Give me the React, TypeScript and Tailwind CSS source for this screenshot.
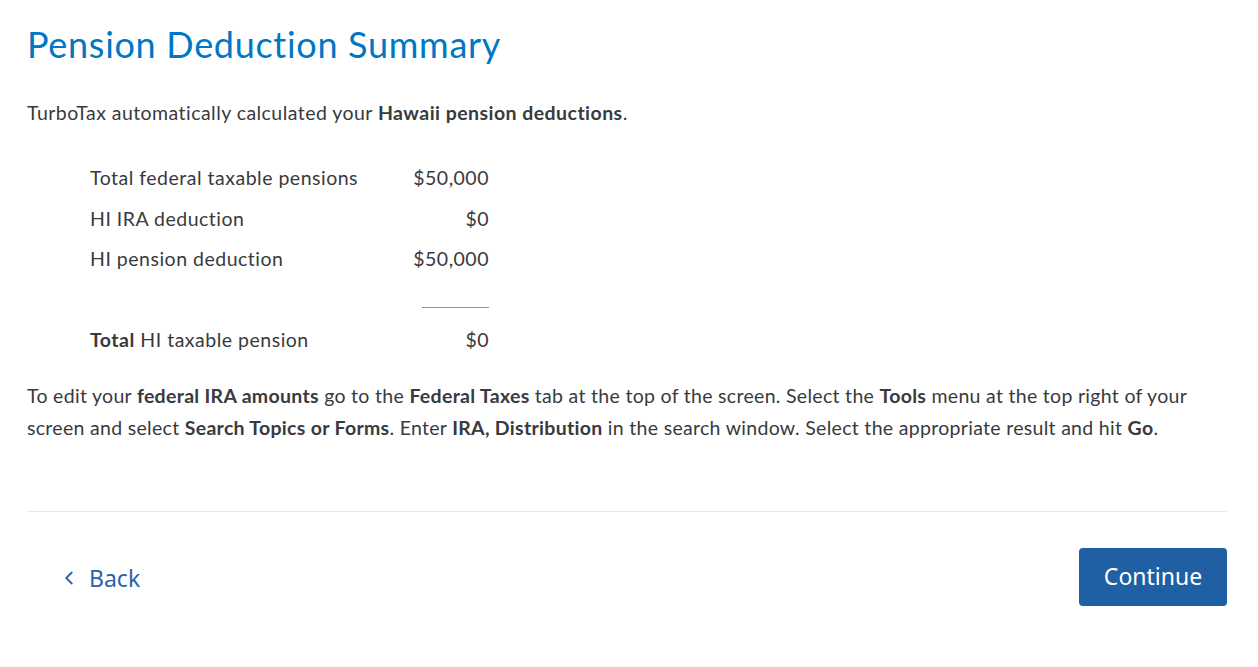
import { FC, ReactNode } from 'react';
import { ChevronLeft } from 'lucide-react';

interface Row {
  label: ReactNode;
  amount: string;
}

const rows: Row[] = [
  { label: 'Total federal taxable pensions', amount: '$50,000' },
  { label: 'HI IRA deduction', amount: '$0' },
  { label: 'HI pension deduction', amount: '$50,000' },
];

const App: FC = () => {
  return (
    <div className="min-h-screen bg-white font-['Lato','Noto_Sans',sans-serif] text-[#393a3d] [font-variant-ligatures:none]">
      <div className="w-[1200px] ml-[27px] pt-[22px]">
        {/* Title */}
        <h1 className="text-[36px] leading-[44px] tracking-[0.7px] text-[#0077c5] font-normal">
          Pension Deduction Summary
        </h1>

        <p className="mt-[34px] text-[19.5px] leading-[26px] tracking-[0.45px]">
          TurboTax automatically calculated your <b className="font-bold">Hawaii pension deductions</b>.
        </p>

        {/* Table of amounts */}
        <div className="ml-[63px] mt-[32px] w-[399px] text-[19.5px] leading-[26px] tracking-[0.5px]">
          {rows.map((r, i) => (
            <div key={i} className="flex justify-between items-center h-[40.5px]">
              <span>{r.label}</span>
              <span>{r.amount}</span>
            </div>
          ))}
          <div className="flex justify-end mt-[27px]">
            <div className="w-[67px] border-t border-[#8d9096]" />
          </div>
          <div className="flex justify-between mt-[19px]">
            <span>
              <b className="font-bold">Total</b> HI taxable pension
            </span>
            <span>$0</span>
          </div>
        </div>

        <p className="mt-[27px] text-[19.5px] leading-[32px] tracking-[0.3px]">
          To edit your <b className="font-bold">federal IRA amounts</b> go to the <b className="font-bold">Federal Taxes</b> tab at the top of the screen. Select the <b className="font-bold">Tools</b> menu at the top right of your screen and select <b className="font-bold">Search Topics or Forms</b>. Enter <b className="font-bold">IRA, Distribution</b> in the search window. Select the appropriate result and hit <b className="font-bold">Go</b>.
        </p>

        {/* Footer nav */}
        <div className="mt-[67px] border-t border-[#e9e9e9] flex items-center justify-between pt-[36px]">
          <button className="flex items-center gap-[9px] pl-[31px] pt-[3px] text-[23px] text-[#2a63ab] font-['Noto_Sans',sans-serif]">
            <ChevronLeft size={22} strokeWidth={2} />
            Back
          </button>
          <button className="h-[58px] w-[148px] rounded-[4px] bg-[#1f5fa3] text-white text-[23px] font-['Noto_Sans',sans-serif]">
            Continue
          </button>
        </div>
      </div>
    </div>
  );
};

export default App;
